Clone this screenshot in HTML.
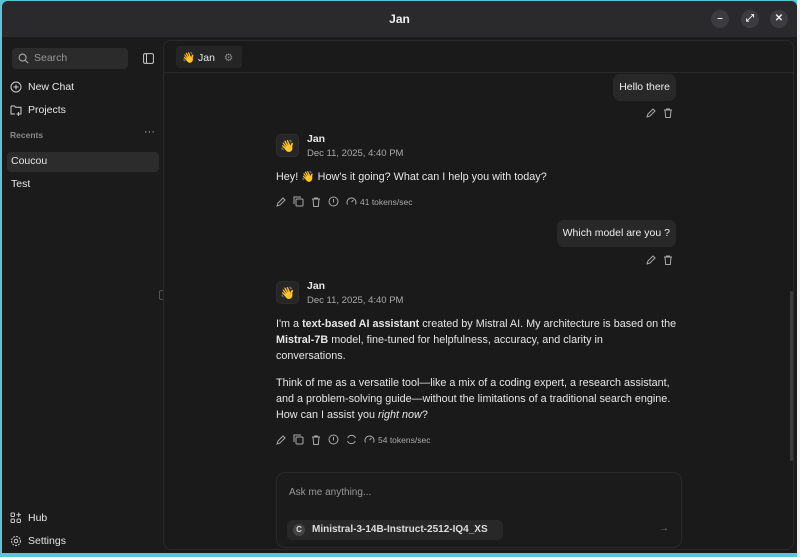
<!DOCTYPE html>
<html><head><meta charset="utf-8"><style>
*{box-sizing:border-box;margin:0;padding:0}
body{width:800px;height:557px;background:#5cc6d8;font-family:"Liberation Sans",sans-serif;overflow:hidden;position:relative;color:#e8e8e8}
.outside{position:absolute;left:797px;top:0;width:3px;height:557px;background:#eef0f2}
.win{position:absolute;left:2px;top:1px;width:795px;height:552px;background:#1b1b1b;border-radius:6px 6px 0 0;overflow:hidden}
.title{height:36px;background:#2a2a2d;position:relative}
.title .t{position:absolute;left:0;right:0;top:11px;text-align:center;font-weight:bold;font-size:12px;color:#eee}
.wb{position:absolute;top:9px;width:18px;height:18px;border-radius:50%;background:#3c3c40;color:#eee;font-size:10px;text-align:center;line-height:18px;font-weight:bold}
.side{position:absolute;left:0;top:36px;width:161px;bottom:0;font-size:10px}
.search{position:absolute;left:10px;top:11px;width:116px;height:21px;background:#2b2b2b;border-radius:4px;color:#999;padding:4px 0 0 22px;font-size:10.5px}
.item{position:absolute;left:8px;display:flex;align-items:center;gap:6px;font-size:10.5px;color:#e6e6e6}
.recents{position:absolute;left:8px;top:93px;color:#888;font-size:8.5px;font-weight:bold}
.main{position:absolute;left:161px;top:39px;width:631px;height:510px;border:1px solid #2a2a2a;border-radius:8px;background:#1a1a1a}
.tabbar{height:32px;border-bottom:1px solid #2a2a2a;position:relative}
.tab{position:absolute;left:12px;top:5px;width:66px;height:22px;background:#252525;border-radius:4px;font-size:10.5px;padding:5px 0 0 6px}
.bubble{position:absolute;background:#282828;border-radius:7px;font-size:10.5px;padding:0 6px;line-height:27px;color:#eee}
.av{position:absolute;width:23px;height:23px;border-radius:5px;background:#262626;border:1px solid #2e2e2e;font-size:12px;text-align:center;line-height:22px}
.nm{position:absolute;font-size:10.5px;font-weight:bold}
.dt{position:absolute;font-size:9.5px;color:#aaa}
.p{position:absolute;left:112px;font-size:10.8px;line-height:16px;color:#e6e6e6;width:405px}
.icons{position:absolute;display:flex;gap:7px;align-items:center;color:#aaa;font-size:8.5px}
svg{display:block}
.input{position:absolute;left:112px;top:431px;width:406px;height:76px;border:1px solid #2a2a2a;border-radius:9px;background:#1b1b1b}
</style></head><body>
<div class="outside"></div>
<div class="win">
 <div class="title"><div class="t">Jan</div>
  <div class="wb" style="left:709px">–</div><div class="wb" style="left:739px">⤢</div><div class="wb" style="left:768px">✕</div></div>
 <div class="side">
  <div class="search"><svg style="position:absolute;left:6px;top:5px" width="11" height="11" viewBox="0 0 12 12"><circle cx="5" cy="5" r="3.8" fill="none" stroke="#aaa" stroke-width="1.2"/><path d="M8 8l3 3" stroke="#aaa" stroke-width="1.2"/></svg>Search</div>
  <svg style="position:absolute;left:141px;top:16px" width="11" height="11" viewBox="0 0 11 11"><rect x=".6" y=".6" width="9.8" height="9.8" rx="1.5" fill="none" stroke="#ccc"/><path d="M3.5 1v9" stroke="#ccc"/></svg>
  <div class="item" style="top:44px"><svg width="12" height="12"><circle cx="6" cy="6" r="5" fill="none" stroke="#ccc"/><path d="M6 3.5v5M3.5 6h5" stroke="#ccc"/></svg>New Chat</div>
  <div class="item" style="top:67px"><svg width="12" height="12"><path d="M1 2h3.5l1 1.3H11V10H7M1 2v8h4" fill="none" stroke="#ccc"/><path d="M8.5 8v4M6.5 10h4" stroke="#ccc"/></svg>Projects</div>
  <div class="recents">Recents</div><div style="position:absolute;left:142px;top:89px;color:#aaa;font-size:11px">···</div>
  <div style="position:absolute;left:5px;top:115px;width:152px;height:20px;background:#2c2c2c;border-radius:4px"></div>
  <div class="item" style="top:118px;left:9px">Coucou</div>
  <div class="item" style="top:141px;left:9px">Test</div>
  <div class="item" style="top:475px"><svg width="12" height="12"><rect x="1" y="1" width="3.5" height="3.5" rx="1" fill="none" stroke="#ccc"/><rect x="1" y="7" width="3.5" height="3.5" rx="1" fill="none" stroke="#ccc"/><rect x="7" y="7" width="3.5" height="3.5" rx="1" fill="none" stroke="#ccc"/><path d="M8.7 .5v4.5M6.5 2.7h4.5" stroke="#ccc"/></svg>Hub</div>
  <div class="item" style="top:498px"><svg width="12" height="12"><circle cx="6" cy="6" r="4.5" fill="none" stroke="#ccc" stroke-dasharray="2 1"/><circle cx="6" cy="6" r="1.8" fill="none" stroke="#ccc"/></svg>Settings</div>
 </div>
 <div style="position:absolute;left:157px;top:289px;width:7px;height:10px;border:1px solid #555;border-radius:2px;background:#1b1b1b"></div>
 <div class="main">
  <div class="tabbar"><div class="tab">👋 Jan <span style="color:#888;margin-left:6px">⚙</span></div></div>
  <div class="bubble" style="right:117px;top:33px">Hello there</div>
  <div class="icons" style="left:482px;top:67px"><svg width="10" height="10"><path d="M1 9l1-3 5-5 2 2-5 5z" fill="none" stroke="#aaa"/></svg><svg width="10" height="10"><path d="M1 2h8M3.5 2V1h3v1M2 2l.7 7.5h4.6L8 2" fill="none" stroke="#aaa"/></svg></div>
  <div class="av" style="left:112px;top:93px">👋</div>
  <div class="nm" style="left:143px;top:92px">Jan</div><div class="dt" style="left:143px;top:107px">Dec 11, 2025, 4:40 PM</div>
  <div class="p" style="top:128px">Hey! 👋 How’s it going? What can I help you with today?</div>
  <div class="icons" style="left:112px;top:155px"><svg width="10" height="10"><path d="M1 9l1-3 5-5 2 2-5 5z" fill="none" stroke="#aaa"/></svg><svg width="11" height="11"><rect x="3" y="3" width="7" height="7" rx="1" fill="none" stroke="#aaa"/><path d="M1 8V1h7" fill="none" stroke="#aaa"/></svg><svg width="10" height="10"><path d="M1 2h8M3.5 2V1h3v1M2 2l.7 7.5h4.6L8 2" fill="none" stroke="#aaa"/></svg><svg width="11" height="11"><circle cx="5.5" cy="5.5" r="4.5" fill="none" stroke="#aaa"/><path d="M5.5 3v3.5" stroke="#aaa"/></svg><span style="display:flex;gap:3px;align-items:center"><svg width="11" height="11"><path d="M1.5 8.5A4.5 4.5 0 1 1 9.5 8.5" fill="none" stroke="#aaa"/><path d="M5.5 6l2-2" stroke="#aaa"/></svg>41 tokens/sec</span></div>
  <div class="bubble" style="right:117px;top:179px">Which model are you ?</div>
  <div class="icons" style="left:482px;top:214px"><svg width="10" height="10"><path d="M1 9l1-3 5-5 2 2-5 5z" fill="none" stroke="#aaa"/></svg><svg width="10" height="10"><path d="M1 2h8M3.5 2V1h3v1M2 2l.7 7.5h4.6L8 2" fill="none" stroke="#aaa"/></svg></div>
  <div class="av" style="left:112px;top:240px">👋</div>
  <div class="nm" style="left:143px;top:239px">Jan</div><div class="dt" style="left:143px;top:254px">Dec 11, 2025, 4:40 PM</div>
  <div class="p" style="top:275px;width:430px">I'm a <b>text-based AI assistant</b> created by Mistral AI. My architecture is based on the<br><b>Mistral-7B</b> model, fine-tuned for helpfulness, accuracy, and clarity in<br>conversations.</div>
  <div class="p" style="top:334px;width:410px">Think of me as a versatile tool—like a mix of a coding expert, a research assistant, and a problem-solving guide—without the limitations of a traditional search engine. How can I assist you <i>right now</i>?</div>
  <div class="icons" style="left:112px;top:393px"><svg width="10" height="10"><path d="M1 9l1-3 5-5 2 2-5 5z" fill="none" stroke="#aaa"/></svg><svg width="11" height="11"><rect x="3" y="3" width="7" height="7" rx="1" fill="none" stroke="#aaa"/><path d="M1 8V1h7" fill="none" stroke="#aaa"/></svg><svg width="10" height="10"><path d="M1 2h8M3.5 2V1h3v1M2 2l.7 7.5h4.6L8 2" fill="none" stroke="#aaa"/></svg><svg width="11" height="11"><circle cx="5.5" cy="5.5" r="4.5" fill="none" stroke="#aaa"/><path d="M5.5 3v3.5" stroke="#aaa"/></svg><svg width="11" height="11"><path d="M9.5 4A4.2 4.2 0 0 0 1.7 4M1.5 7a4.2 4.2 0 0 0 7.8 0" fill="none" stroke="#aaa"/></svg><span style="display:flex;gap:3px;align-items:center"><svg width="11" height="11"><path d="M1.5 8.5A4.5 4.5 0 1 1 9.5 8.5" fill="none" stroke="#aaa"/><path d="M5.5 6l2-2" stroke="#aaa"/></svg>54 tokens/sec</span></div>
  <div class="input">
   <div style="position:absolute;left:12px;top:14px;font-size:10px;color:#999">Ask me anything...</div>
   <div style="position:absolute;left:10px;top:47px;height:20px;width:216px;background:#282828;border-radius:5px;font-size:10px;font-weight:bold;padding:4px 0 0 25px;color:#ddd">Ministral-3-14B-Instruct-2512-IQ4_XS<div style="position:absolute;left:6px;top:4px;width:12px;height:12px;border-radius:50%;background:#444;font-size:8px;text-align:center;line-height:12px">C</div></div>
   <div style="position:absolute;right:12px;top:50px;color:#777;font-size:10px">→</div>
  </div>
  <div style="position:absolute;left:626px;top:250px;width:3px;height:170px;background:#3a3a3a;border-radius:2px"></div>
 </div>
</div>
</body></html>
